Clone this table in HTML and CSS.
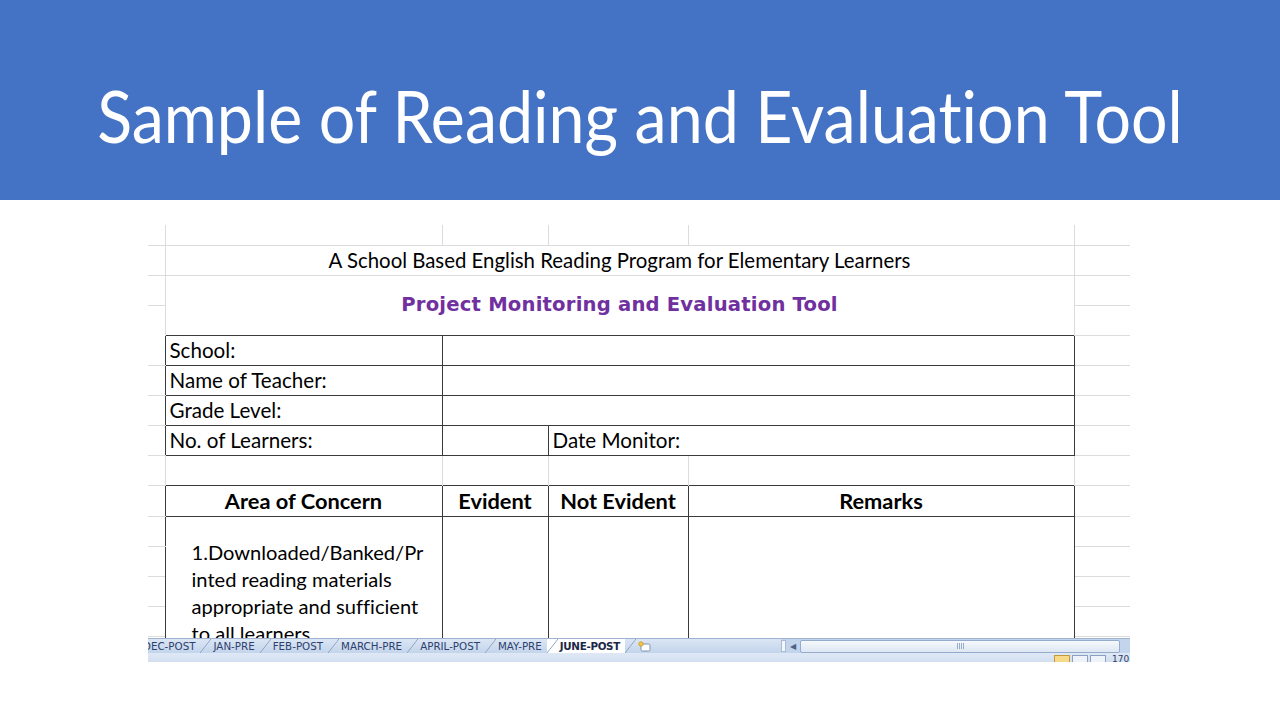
FILE: index.html
```html
<!DOCTYPE html>
<html lang="en">
<head>
<meta charset="utf-8">
<title>Sample of Reading and Evaluation Tool</title>
<link rel="stylesheet" href="styles.css">
</head>
<body>
<header class="banner">
  <h1 class="banner-title">Sample of Reading and Evaluation Tool</h1>
</header>
<main class="slide">
  <section class="excel">
    <div class="sheet">
      <table class="grid">
        <colgroup>
          <col class="c0"><col class="c1"><col class="c2"><col class="c3"><col class="c4"><col class="c5">
        </colgroup>
        <tbody>
          <tr class="h20">
            <td class="g"></td><td class="g"></td><td class="g"></td><td class="g"></td><td class="g"></td><td class="g gl"></td>
          </tr>
          <tr class="h30">
            <td class="g"></td>
            <td class="g subtitle" colspan="4">A School Based English Reading Program for Elementary Learners</td>
            <td class="g gl"></td>
          </tr>
          <tr class="h30">
            <td class="g"></td>
            <td class="g nb title" colspan="4" rowspan="2">Project Monitoring and Evaluation Tool</td>
            <td class="g gl"></td>
          </tr>
          <tr class="h30">
            <td class="g nb"></td>
            <td class="g gl"></td>
          </tr>
          <tr class="h30">
            <td class="g nr"></td>
            <td class="d label">School:</td>
            <td class="d" colspan="3"></td>
            <td class="g gl"></td>
          </tr>
          <tr class="h30">
            <td class="g nr"></td>
            <td class="d label">Name of Teacher:</td>
            <td class="d" colspan="3"></td>
            <td class="g gl"></td>
          </tr>
          <tr class="h30">
            <td class="g nr"></td>
            <td class="d label">Grade Level:</td>
            <td class="d" colspan="3"></td>
            <td class="g gl"></td>
          </tr>
          <tr class="h30">
            <td class="g nr"></td>
            <td class="d label">No. of Learners:</td>
            <td class="d"></td>
            <td class="d label" colspan="2">Date Monitor:</td>
            <td class="g gl"></td>
          </tr>
          <tr class="h30">
            <td class="g"></td>
            <td class="g nb"></td>
            <td class="g nb"></td>
            <td class="g nb"></td>
            <td class="g nb"></td>
            <td class="g gl"></td>
          </tr>
          <tr class="h31">
            <td class="g nr"></td>
            <td class="d head">Area of Concern</td>
            <td class="d head">Evident</td>
            <td class="d head">Not Evident</td>
            <td class="d head">Remarks</td>
            <td class="g gl"></td>
          </tr>
          <tr class="h30">
            <td class="g nr"></td>
            <td class="d item" rowspan="5">1.Downloaded/Banked/Pr<br>inted reading materials<br>appropriate and sufficient<br>to all learners</td>
            <td class="d" rowspan="5"></td>
            <td class="d" rowspan="5"></td>
            <td class="d" rowspan="5"></td>
            <td class="g gl"></td>
          </tr>
          <tr class="h30"><td class="g nr"></td><td class="g gl"></td></tr>
          <tr class="h30"><td class="g nr"></td><td class="g gl"></td></tr>
          <tr class="h30"><td class="g nr"></td><td class="g gl"></td></tr>
          <tr class="h30"><td class="g nr"></td><td class="g gl"></td></tr>
        </tbody>
      </table>
    </div>
    <div class="tabstrip">
      <div class="tabs">
        <span class="tab first">DEC-POST</span>
        <span class="tab">JAN-PRE</span>
        <span class="tab">FEB-POST</span>
        <span class="tab">MARCH-PRE</span>
        <span class="tab">APRIL-POST</span>
        <span class="tab">MAY-PRE</span>
        <span class="tab active">JUNE-POST</span>
        <span class="tab newtab">
          <svg width="13" height="11" viewBox="0 0 13 11" aria-hidden="true">
            <rect x="3" y="3" width="9" height="7" rx="1.5" fill="#ffffff" stroke="#7d93b5" stroke-width="1"/>
            <circle cx="3" cy="3" r="2.2" fill="#f6c44a" stroke="#c99a1e" stroke-width="0.8"/>
          </svg>
        </span>
      </div>
      <div class="hscroll">
        <span class="splitter"></span>
        <span class="arrow">&#9664;</span>
        <div class="track"><span class="grip"></span></div>
      </div>
    </div>
    <div class="statusbar">
      <div class="views">
        <span class="vbtn on"></span><span class="vbtn"></span><span class="vbtn"></span>
      </div>
      <span class="zoomtxt">170</span>
    </div>
  </section>
</main>
</body>
</html>
```
FILE: styles.css
```css
html, body {
  margin: 0;
  padding: 0;
  background: #ffffff;
}

body {
  width: 1280px;
  height: 720px;
  overflow: hidden;
  font-family: Lato, "Open Sans", "Liberation Sans", sans-serif;
  font-variant-ligatures: none;
}

.banner {
  height: 200px;
  background: #4472c4;
  display: flex;
  align-items: center;
  justify-content: center;
}

.banner-title {
  margin: 0;
  padding-top: 26px;
  font-family: Lato, "Open Sans", sans-serif;
  font-weight: 400;
  font-size: 64.5px;
  color: #ffffff;
  letter-spacing: 0;
  transform: scaleY(1.12);
  font-variant-ligatures: none;
}

.slide {
  padding: 25px 0 0 148px;
}

.excel {
  width: 982px;
}

.sheet {
  height: 413px;
  overflow: hidden;
}

.grid {
  border-collapse: collapse;
  table-layout: fixed;
  width: 982px;
  font-family: Lato, "Open Sans", sans-serif;
  color: #000000;
}

.c0 { width: 17px; }
.c1 { width: 277px; }
.c2 { width: 106px; }
.c3 { width: 140px; }
.c4 { width: 386px; }
.c5 { width: 56px; }

.h20 { height: 20px; }
.h30 { height: 30px; }
.h31 { height: 31px; }

.grid td {
  padding: 0;
  font-size: 20.6px;
  line-height: 22px;
  white-space: nowrap;
  overflow: hidden;
}

.g {
  border-right: 1px solid #dcdcdc;
  border-bottom: 1px solid #dcdcdc;
}

.g.gl {
  border-right: none;
}

.g.nb {
  border-bottom: none;
}

.g.nr {
  border-right: none;
}

.d {
  border: 1px solid #3a3a3a;
}

.grid td.subtitle {
  text-align: center;
  font-size: 20.4px;
}

.grid td.title {
  text-align: center;
  font-family: "DejaVu Sans", Verdana, sans-serif;
  font-weight: 700;
  font-size: 19.6px;
  letter-spacing: 0.2px;
  color: #7030a0;
}

.grid td.label {
  padding-left: 4px;
}

.grid td.head {
  text-align: center;
  font-weight: 700;
  font-size: 21.8px;
}

.grid td.item {
  vertical-align: top;
  white-space: normal;
  padding: 22px 0 0 26px;
  line-height: 27px;
  font-size: 20.1px;
}

.tabstrip {
  height: 14px;
  display: flex;
  background: #c8d8ee;
  border-top: 1px solid #9fb2cf;
}

.tabs {
  flex: 0 0 633px;
  display: flex;
  overflow: hidden;
  background: linear-gradient(#dbe6f4, #c3d4eb);
}

.tab {
  position: relative;
  display: flex;
  align-items: center;
  padding: 0 5px 0 13px;
  font-family: "DejaVu Sans", Verdana, sans-serif;
  font-size: 10.3px;
  color: #2c3f6e;
  white-space: nowrap;
}

.tab::before {
  content: "";
  position: absolute;
  left: 0;
  top: 0;
  bottom: 0;
  width: 11px;
  background: linear-gradient(to bottom right, transparent calc(50% - 0.7px), #8aa0c2 50%, transparent calc(50% + 0.7px));
}

.tab.first {
  margin-left: -13px;
  padding-left: 8px;
}

.tab.first::before {
  display: none;
}

.tab.active {
  background: #ffffff;
  font-weight: 700;
  letter-spacing: -0.3px;
  color: #1b2747;
}

.tab.newtab {
  padding: 0 6px 0 13px;
}

.hscroll {
  flex: 1;
  display: flex;
  align-items: center;
  background: #c3d5ec;
}

.splitter {
  width: 3px;
  height: 10px;
  background: #f4f7fb;
  border: 1px solid #a9bbd6;
}

.arrow {
  margin-left: 4px;
  font-size: 8px;
  color: #4d6285;
  font-family: "DejaVu Sans", sans-serif;
}

.track {
  margin-left: 4px;
  width: 318px;
  height: 11px;
  border: 1px solid #95abcc;
  border-radius: 2px;
  background: linear-gradient(#f6f9fd, #dde6f2);
  display: flex;
  align-items: center;
  justify-content: center;
}

.grip {
  width: 7px;
  height: 6px;
  background: repeating-linear-gradient(90deg, #9aaccc 0 1px, transparent 1px 2px);
}

.statusbar {
  height: 9px;
  background: linear-gradient(#dfe8f5, #d3dff0);
  display: flex;
  justify-content: flex-end;
  align-items: flex-start;
  overflow: hidden;
}

.views {
  display: flex;
  gap: 2px;
  margin-top: 2px;
}

.vbtn {
  width: 14px;
  height: 10px;
  border: 1px solid #8aa0c2;
  background: #eef3fa;
}

.vbtn.on {
  background: #f7d98a;
  border-color: #c29a3c;
}

.zoomtxt {
  margin: 1px 0 0 6px;
  font-family: "DejaVu Sans", sans-serif;
  font-size: 9px;
  color: #2c3f6e;
  width: 18px;
  overflow: hidden;
}
```
